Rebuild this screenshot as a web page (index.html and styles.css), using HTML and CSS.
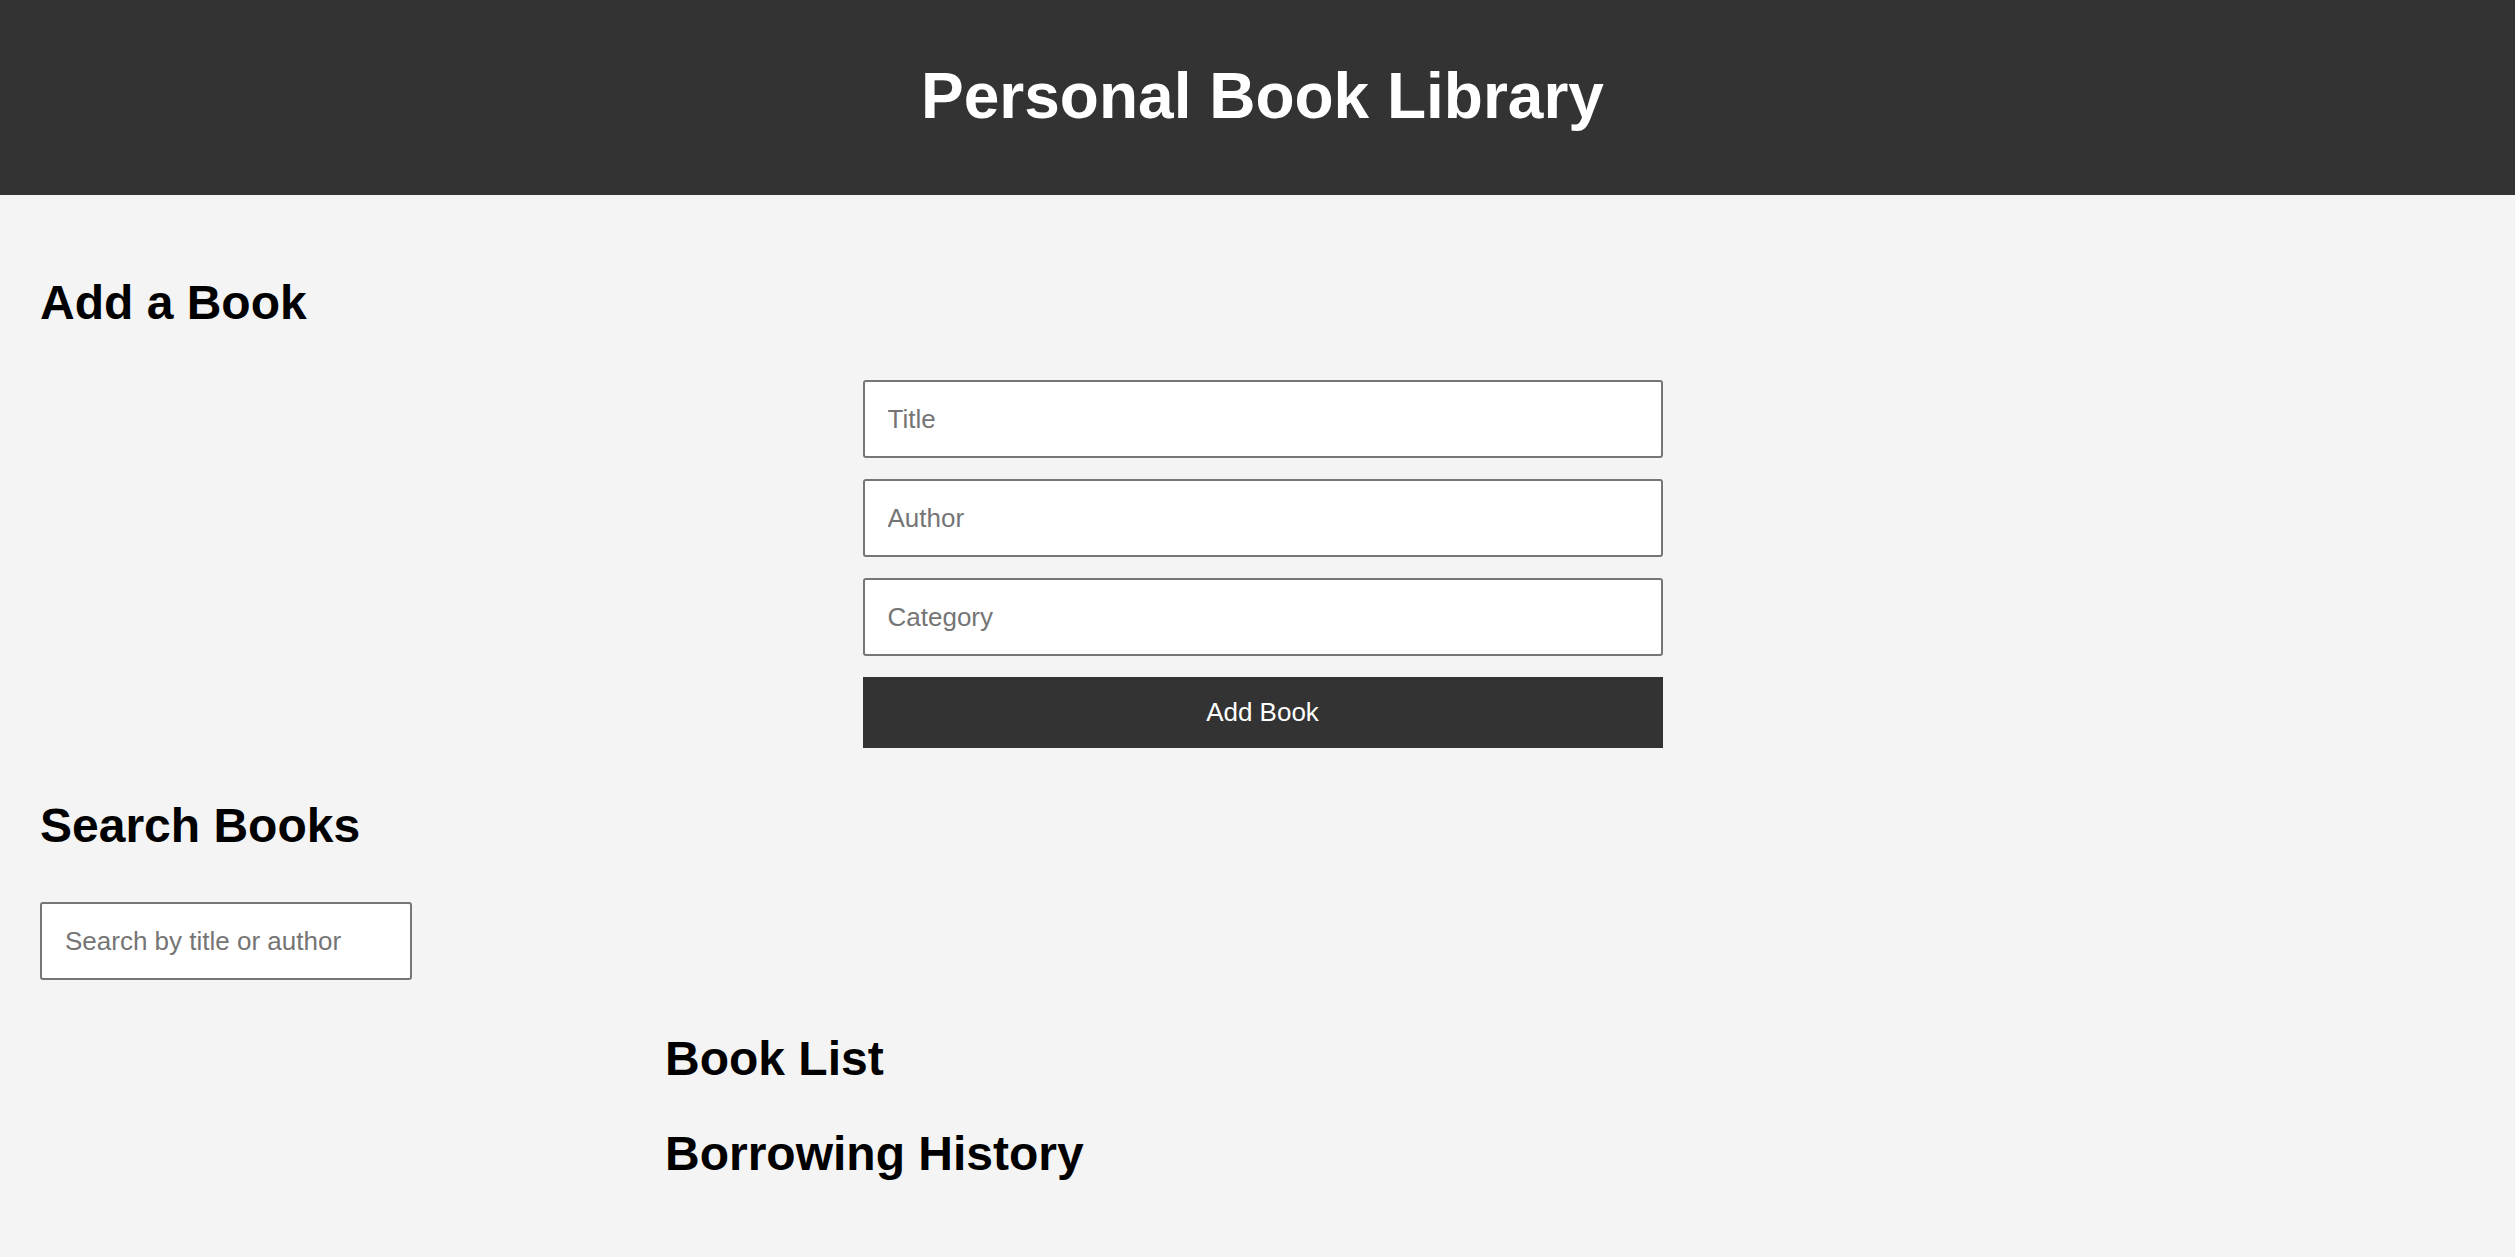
FILE: index.html
```html
<!DOCTYPE html>
<html lang="en">
<head>
<meta charset="utf-8">
<title>Personal Book Library</title>
<link rel="stylesheet" href="styles.css">
</head>
<body>
<header class="site-header">
  <h1 class="site-title">Personal Book Library</h1>
</header>
<main class="main">
  <section class="add-section">
    <h2 class="section-title">Add a Book</h2>
    <form class="add-form">
      <input class="field" type="text" placeholder="Title">
      <input class="field" type="text" placeholder="Author">
      <input class="field" type="text" placeholder="Category">
      <button class="add-btn" type="button">Add Book</button>
    </form>
  </section>
  <section class="search-section">
    <h2 class="section-title">Search Books</h2>
    <input class="field search-field" type="text" placeholder="Search by title or author">
  </section>
  <section class="lists-section">
    <h2 class="section-title">Book List</h2>
    <ul class="book-list"></ul>
    <h2 class="section-title">Borrowing History</h2>
    <ul class="history-list"></ul>
  </section>
</main>
</body>
</html>
```
FILE: styles.css
```css
* { box-sizing: border-box; }
html, body {
  margin: 0;
  padding: 0;
  background: #f4f4f4;
  font-family: "Liberation Sans", Arial, sans-serif;
  color: #000;
}
.site-header {
  background: #333333;
  color: #ffffff;
  text-align: center;
  height: 195px;
  padding: 59px 0 0 10px;
}
.site-title {
  margin: 0;
  font-size: 64px;
  line-height: 74px;
  font-weight: bold;
}
.main {
  padding: 40px 40px 40px;
}
.section-title {
  font-size: 48px;
  font-weight: bold;
  line-height: 55px;
  margin: 40px 0;
}
.add-form {
  width: 810px;
  margin: 0 auto;
  padding: 10px 0 10px 10px;
  display: flex;
  flex-direction: column;
  gap: 21px;
}
.field {
  display: block;
  height: 78px;
  padding: 0 23px;
  border: 2px solid #767676;
  border-radius: 3px;
  background: #fff;
  font-family: "Liberation Sans", Arial, sans-serif;
  font-size: 26px;
  color: #000;
  width: 100%;
}
.field::placeholder {
  color: #757575;
}
.add-btn {
  height: 71px;
  border: none;
  background: #333333;
  color: #ffffff;
  font-family: "Liberation Sans", Arial, sans-serif;
  font-size: 26px;
  cursor: pointer;
}
.search-section {
  padding-bottom: 11px;
}
.search-section .section-title {
  margin-bottom: 49px;
}
.search-field {
  width: 372px;
}
.lists-section {
  width: 1185px;
  margin: 0 auto;
}
.book-list, .history-list {
  list-style: none;
  margin: 0;
  padding: 0;
}
```
